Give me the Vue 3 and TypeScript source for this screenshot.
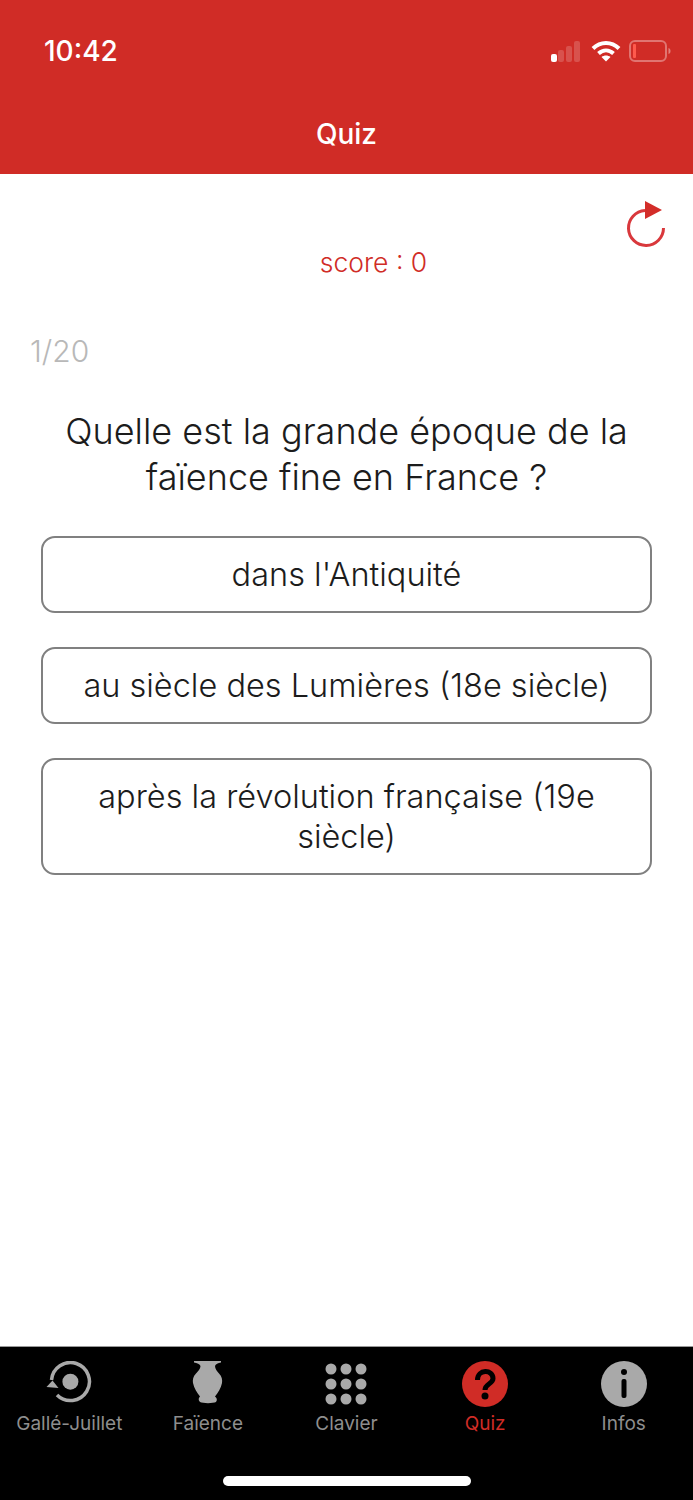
<script setup lang="ts">
const answers = [
  "dans l'Antiquité",
  'au siècle des Lumières (18e siècle)',
  'après la révolution française (19e siècle)'
]

const dots = [8, 23, 38].flatMap((y) => [8, 23, 38].map((x) => ({ x, y })))
</script>

<template>
  <div class="screen">
    <header class="header">
      <div class="status">
        <span class="time">10:42</span>
        <div class="status-icons">
          <svg width="32" height="22" viewBox="0 0 32 22">
            <rect x="0" y="14" width="6" height="8" rx="2" fill="#fff" />
            <rect x="7" y="10" width="6" height="12" rx="2" fill="#fff" opacity=".18" />
            <rect x="15" y="6" width="6" height="16" rx="2" fill="#fff" opacity=".18" />
            <rect x="23" y="1" width="6" height="21" rx="2" fill="#fff" opacity=".18" />
          </svg>
          <svg class="wifi" width="30" height="22" viewBox="0 0 30 22" fill="none" stroke="#fff" stroke-width="4">
            <path d="M2 8.500C9.500 1 20.500 1 28 8.500" />
            <path d="M7.500 13.500C12 9.500 18 9.500 22.500 13.500" />
            <path d="M15 21.500L10.500 17C13 15 17 15 19.500 17Z" fill="#fff" stroke="none" />
          </svg>
          <svg width="42" height="22" viewBox="0 0 42 22">
            <rect x="1" y="1" width="36" height="20" rx="5" fill="none" stroke="#fff" stroke-width="2" opacity=".35" />
            <rect x="4" y="4" width="3" height="14" rx="1" fill="#ff5a4d" />
            <path d="M39.500 8C41 8.500 41.500 9.500 41.500 11C41.500 12.500 41 13.500 39.500 14Z" fill="#fff" opacity=".4" />
          </svg>
        </div>
      </div>
      <h1 class="title">Quiz</h1>
    </header>

    <main class="content">
      <div class="tools">
        <svg width="60" height="60" viewBox="0 0 60 60" fill="none">
          <path d="M29 12.500A17.500 17.500 0 1 0 47.500 30" stroke="#d9383c" stroke-width="3" />
          <path d="M29 3L46 12L29 21Z" fill="#d32d29" />
        </svg>
      </div>
      <p class="score">score : 0</p>
      <p class="count">1/20</p>
      <h2 class="question">Quelle est la grande époque de la faïence fine en France ?</h2>
      <div class="answers">
        <button v-for="answer in answers" :key="answer" class="answer" type="button">{{ answer }}</button>
      </div>
    </main>

    <nav class="tabs">
      <div class="tab">
        <svg width="46" height="46" viewBox="0 0 46 46" fill="none">
          <path d="M5.500 19A19 19 0 1 1 11 34" stroke="#a9a9a9" stroke-width="3.500" />
          <path d="M0.500 26L6.500 19.500L12.500 27Z" fill="#a9a9a9" />
          <circle cx="24.400" cy="20.700" r="8" fill="#a9a9a9" />
        </svg>
        <span>Gallé-Juillet</span>
      </div>
      <div class="tab">
        <svg width="46" height="46" viewBox="0 0 46 46">
          <path
            d="M9 0H36V1.500C33 2 30.500 3 30 5C30 8 32 10 34 12.500C37 15.500 37.500 19 37 22C36 27 33 32 30 35.500C32 37 32.500 39 31 41C28 42.500 18 42.500 15 41C13 39 13.500 37 15 35.500C12 32 9 27 8 22C7.500 19 8 15.500 11 12.500C13 10 15.500 8 15.500 5C15 3 12 2 9 1.500Z"
            fill="#a9a9a9"
          />
        </svg>
        <span>Faïence</span>
      </div>
      <div class="tab">
        <svg width="46" height="46" viewBox="0 0 46 46">
          <circle v-for="dot in dots" :key="`${dot.x}-${dot.y}`" :cx="dot.x" :cy="dot.y" r="5.500" fill="#a9a9a9" />
        </svg>
        <span>Clavier</span>
      </div>
      <div class="tab active">
        <svg width="46" height="46" viewBox="0 0 46 46">
          <circle cx="23" cy="23" r="23" fill="#d02c26" />
          <path d="M15.500 19C15.500 8 31 8 31 17.500C31 23 23 22.500 23 29" fill="none" stroke="#000" stroke-width="5" />
          <circle cx="23" cy="35" r="3.500" fill="#000" />
        </svg>
        <span>Quiz</span>
      </div>
      <div class="tab">
        <svg width="46" height="46" viewBox="0 0 46 46">
          <circle cx="23" cy="23" r="23" fill="#a9a9a9" />
          <circle cx="23" cy="11" r="3" fill="#000" />
          <rect x="20.500" y="18" width="5" height="19" rx="2" fill="#000" />
        </svg>
        <span>Infos</span>
      </div>
      <div class="home-bar"></div>
    </nav>
  </div>
</template>

<style scoped>
.screen {
  display: flex;
  flex-direction: column;
  height: 1500px;
  font-family: Inter, "Liberation Sans", sans-serif;
  background: #fff;
}

.header {
  height: 174px;
  box-sizing: border-box;
  padding: 31px 22px 0 44px;
  background: #d02c26;
  color: #fff;
}

.status {
  display: flex;
  align-items: center;
  justify-content: space-between;
  height: 40px;
}

.time {
  font-size: 28px;
  font-weight: 500;
}

.status-icons {
  display: flex;
  align-items: center;
  gap: 8px;
}

.title {
  margin: 43px 0 0 -22px;
  text-align: center;
  font-size: 28px;
  font-weight: 500;
  line-height: 40px;
}

.content {
  flex: 1;
  display: flex;
  flex-direction: column;
}

.tools {
  display: flex;
  justify-content: flex-end;
  height: 47px;
  padding: 24px 17px 0 0;
}

.score {
  margin: 0;
  padding-left: 54px;
  text-align: center;
  font-size: 26.500px;
  font-weight: 300;
  line-height: 34px;
  color: #d02c26;
}

.count {
  margin: 52px 0 0 30px;
  font-size: 30px;
  font-weight: 300;
  line-height: 40px;
  color: #b8b8b8;
}

.question {
  margin: 37px 50px 0;
  text-align: center;
  font-size: 36px;
  font-weight: 300;
  line-height: 46px;
  color: #1c1c1c;
}

.answers {
  display: flex;
  flex-direction: column;
  gap: 34px;
  margin: 36px 41px 0 41px;
}

.answer {
  min-height: 77px;
  padding: 16.500px 30px;
  border: 2px solid #808080;
  border-radius: 14px;
  background: #fff;
  font-family: inherit;
  font-size: 32.500px;
  font-weight: 300;
  line-height: 40px;
  color: #1c1c1c;
}

.tabs {
  position: relative;
  display: grid;
  grid-template-columns: repeat(5, 1fr);
  height: 154px;
  box-sizing: border-box;
  padding-top: 14px;
  border-top: 1px solid #999;
  background: #000;
}

.tab {
  display: flex;
  flex-direction: column;
  align-items: center;
  gap: 4px;
  font-size: 19px;
  line-height: 26px;
  color: #8e8e8e;
}

.tab.active {
  color: #d02c26;
}

.home-bar {
  position: absolute;
  left: 223px;
  bottom: 14px;
  width: 248px;
  height: 10px;
  border-radius: 5px;
  background: #fff;
}
</style>
